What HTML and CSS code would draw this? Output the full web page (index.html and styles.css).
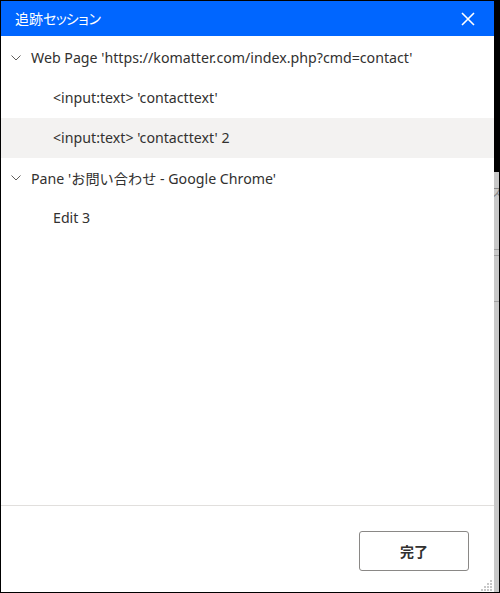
FILE: index.html
```html
<!DOCTYPE html>
<html lang="ja">
<head>
<meta charset="utf-8">
<link rel="stylesheet" href="styles.css">
</head>
<body>
<div class="screen">
  <div class="dialog">
    <div class="titlebar">
      <span class="title">追跡<span class="kana">セッション</span></span>
      <svg class="close" width="14" height="14" viewBox="0 0 14 14"><path d="M1 1 L13 13 M13 1 L1 13" stroke="#fff" stroke-width="1.6" fill="none"/></svg>
    </div>
    <div class="tree">
      <div class="row lvl0">
        <svg class="chev" width="10" height="6" viewBox="0 0 10 6"><path d="M0.5 0.5 L5 5 L9.5 0.5" stroke="#605e5c" stroke-width="1" fill="none"/></svg>
        <span>Web Page 'https://komatter.com/index.php?cmd=contact'</span>
      </div>
      <div class="row lvl1"><span>&lt;input:text&gt; 'contacttext'</span></div>
      <div class="row lvl1 selected"><span>&lt;input:text&gt; 'contacttext' 2</span></div>
      <div class="row lvl0">
        <svg class="chev" width="10" height="6" viewBox="0 0 10 6"><path d="M0.5 0.5 L5 5 L9.5 0.5" stroke="#605e5c" stroke-width="1" fill="none"/></svg>
        <span>Pane 'お問い合わせ - Google Chrome'</span>
      </div>
      <div class="row lvl1"><span>Edit 3</span></div>
    </div>
    <div class="footer">
      <button class="done">完了</button>
      <svg class="grip" width="12" height="12" viewBox="0 0 12 12">
        <rect x="9" y="1" width="2" height="2" fill="#c8c8c8"/>
        <rect x="6" y="4" width="2" height="2" fill="#c8c8c8"/>
        <rect x="9" y="4" width="2" height="2" fill="#c8c8c8"/>
        <rect x="3" y="7" width="2" height="2" fill="#c8c8c8"/>
        <rect x="6" y="7" width="2" height="2" fill="#c8c8c8"/>
        <rect x="9" y="7" width="2" height="2" fill="#c8c8c8"/>
        <rect x="0" y="10" width="2" height="2" fill="#c8c8c8"/>
        <rect x="3" y="10" width="2" height="2" fill="#c8c8c8"/>
        <rect x="6" y="10" width="2" height="2" fill="#c8c8c8"/>
        <rect x="9" y="10" width="2" height="2" fill="#c8c8c8"/>
      </svg>
    </div>
  </div>
  <div class="side">
    <div class="side-top"></div>
    <div class="side-bottom">
      <div class="side-gray">
        <span class="side-glyph">ス</span>
        <div class="side-line l1"></div>
        <div class="side-line l2"></div>
        <div class="side-line l3"></div>
      </div>
      <div class="side-black"></div>
    </div>
  </div>
</div>
</body>
</html>
```
FILE: styles.css
```css
* { box-sizing: border-box; }
html, body { margin: 0; padding: 0; background: #000; }
body {
  font-family: "Noto Sans", "Noto Sans CJK JP", sans-serif;
  width: 500px;
  height: 593px;
  overflow: hidden;
}
.screen {
  display: flex;
  width: 500px;
  height: 593px;
}
.dialog {
  width: 493px;
  height: 591px;
  margin: 1px 0 0 1px;
  background: #fff;
  display: flex;
  flex-direction: column;
}
.titlebar {
  height: 35px;
  background: #0066ff;
  display: flex;
  align-items: center;
  justify-content: space-between;
  padding: 0 19px 0 14px;
  flex-shrink: 0;
}
.title {
  color: #fff;
  font-family: "Noto Sans CJK JP", sans-serif;
  font-size: 14px;
  line-height: 1;
  padding-bottom: 1px;
}
.kana { letter-spacing: -2.8px; }
.close { display: block; margin-top: 1px; }
.tree {
  flex: 1;
  padding-top: 2px;
  border-bottom: 1px solid #e1dfdd;
}
.row {
  height: 40px;
  display: flex;
  align-items: center;
  color: #323130;
  font-size: 14.2px;
  font-family: "Noto Sans", "Noto Sans CJK JP", sans-serif;
  white-space: nowrap;
}
.row span { padding-bottom: 1px; }
.lvl0 { padding-left: 10px; }
.lvl1 { padding-left: 52px; }
.chev { margin-right: 10px; flex-shrink: 0; }
.selected { background: #f3f2f1; }
.footer {
  height: 86px;
  flex-shrink: 0;
  position: relative;
  display: flex;
  justify-content: flex-end;
  padding: 25px 25px 0 0;
}
.done {
  width: 110px;
  height: 40px;
  border: 1px solid #8a8886;
  border-radius: 3px;
  background: #fff;
  font-family: "Noto Sans CJK JP", sans-serif;
  font-weight: 700;
  font-size: 14px;
  color: #323130;
  padding: 0;
}
.grip {
  position: absolute;
  right: 1px;
  bottom: 1px;
}
.side {
  width: 6px;
  height: 592px;
  display: flex;
  flex-direction: column;
}
.side-top { height: 172px; background: #000; }
.side-bottom { flex: 1; display: flex; }
.side-gray {
  width: 5px;
  background: #c8c8c8;
  position: relative;
  overflow: hidden;
}
.side-black { width: 1px; background: #000; }
.side-glyph {
  position: absolute;
  left: -4px;
  top: 10px;
  font-size: 13px;
  color: #888;
  font-family: "Noto Sans CJK JP", sans-serif;
}
.side-line { position: absolute; left: 0; width: 5px; height: 1px; background: #a0a0a0; }
.l1 { top: 77px; }
.l2 { top: 83px; }
.l3 { top: 129px; }
```
